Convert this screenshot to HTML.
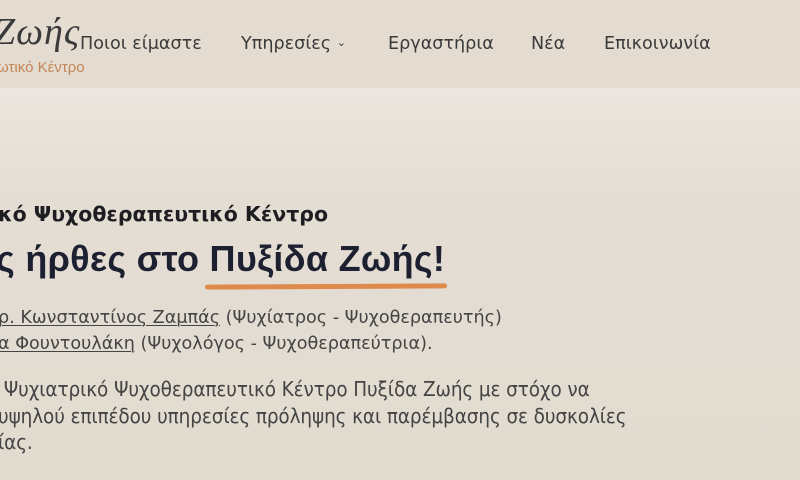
<!DOCTYPE html>
<html><head><meta charset="utf-8"><style>
html,body{margin:0;padding:0}
body{width:800px;height:480px;overflow:hidden;position:relative;background:linear-gradient(#ebe6df 88px,#e4ddd3 200px,#e2dbd0 480px);font-family:"DejaVu Sans","Liberation Sans",sans-serif}
.hdr{position:absolute;left:0;top:0;width:800px;height:88px;background:#e4dcd1}
.logo{position:absolute;left:-6px;top:10px;font-family:"Liberation Serif",serif;font-style:italic;font-size:38px;color:#3a3a3a;letter-spacing:1px}
.sub{position:absolute;left:-3px;top:59px;font-family:"Liberation Sans",sans-serif;font-size:15px;color:#c58656}
.nav{position:absolute;top:34px;font-size:17.6px;color:#3a3a3a;white-space:nowrap}
.t{position:absolute;white-space:nowrap}
.h2{left:-2px;top:202px;font-size:20.5px;font-weight:bold;color:#1d1d22}
.h1{left:-4px;top:238px;font-family:"Liberation Sans",sans-serif;font-size:36px;font-weight:bold;color:#1d2030;letter-spacing:0.3px}
.ul{position:absolute;left:205px;top:284px;width:242px;height:5px;background:#dd8a4a;border-radius:3px;transform:rotate(-0.3deg)}
.p{font-size:17.6px;color:#444;left:-2px}
.p u{text-decoration-thickness:1px;text-underline-offset:2px}
.c{font-family:"Liberation Sans Narrow","DejaVu Sans Condensed",sans-serif;font-size:20.5px;color:#444;left:-2px;letter-spacing:-0.1px}
</style></head><body>
<div class="hdr"></div>
<div class="logo">Ζωής</div>
<div class="sub">ωτικό Κέντρο</div>
<div class="nav" style="left:80px">Ποιοι είμαστε</div>
<div class="nav" style="left:241px">Υπηρεσίες <span style="font-size:11px;position:relative;top:-3px">&#8964;</span></div>
<div class="nav" style="left:388px">Εργαστήρια</div>
<div class="nav" style="left:531px">Νέα</div>
<div class="nav" style="left:604px">Επικοινωνία</div>
<div class="t h2">κό Ψυχοθεραπευτικό Κέντρο</div>
<div class="t h1">ς ήρθες στο Πυξίδα Ζωής!</div>
<div class="ul"></div>
<div class="t p" style="top:308px"><u>ρ. Κωνσταντίνος Ζαμπάς</u> (Ψυχίατρος - Ψυχοθεραπευτής)</div>
<div class="t p" style="top:334px"><u>α Φουντουλάκη</u> (Ψυχολόγος - Ψυχοθεραπεύτρια).</div>
<div class="t c" style="top:377px">&nbsp;Ψυχιατρικό Ψυχοθεραπευτικό Κέντρο Πυξίδα Ζωής με στόχο να</div>
<div class="t c" style="top:404px">υψηλού επιπέδου υπηρεσίες πρόληψης και παρέμβασης σε δυσκολίες</div>
<div class="t c" style="top:430px">ίας.</div>
</body></html>
